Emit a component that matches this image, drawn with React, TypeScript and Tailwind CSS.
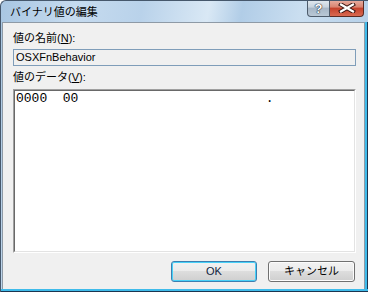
export default function App() {
  const jp = { fontFamily: '"Liberation Sans", "Noto Sans CJK JP", sans-serif' };

  return (
    <div
      className="w-[368px] h-[292px] flex flex-col overflow-hidden rounded-tl-[6px] border-l border-t border-[#46586c] bg-[linear-gradient(100deg,#a8c6e2_0%,#c6dbef_18%,#b9d2ea_34%,#d9e8f5_50%,#b1cde7_58%,#cadef0_72%,#a9c8e4_100%)]"
      style={jp}
    >
      {/* Title bar */}
      <div className="h-[21px] flex items-start">
        <span className="pl-[9px] pt-[5px] text-[11px] leading-[13px] text-black">バイナリ値の編集</span>
        <div className="ml-auto mr-[4px] -mt-px flex">
          <div className="w-[23px] h-[17px] flex items-center justify-center rounded-bl-[4px] border border-t-0 border-[#4d5b6b] bg-[linear-gradient(#e3eaf0_0%,#c7d3de_45%,#a6b6c6_50%,#b9c8d6_100%)]">
            <span className="text-[13px] leading-[13px] font-bold text-white [text-shadow:0_0_1px_#1d2a38,0_0_1px_#1d2a38,0_0_1px_#1d2a38]">?</span>
          </div>
          <div className="w-[34px] h-[17px] flex items-center justify-center rounded-br-[4px] border border-t-0 border-l-0 border-[#5b2a22] bg-[linear-gradient(#e8b0a4_0%,#d9826f_45%,#c5402a_50%,#d86a52_100%)]">
            <svg width="18" height="10" viewBox="0 0 18 10">
              <path d="M3 1.5 L15 8.5 M15 1.5 L3 8.5" stroke="#3a1410" strokeWidth="4.2" strokeLinecap="square" />
              <path d="M3 1.5 L15 8.5 M15 1.5 L3 8.5" stroke="#ffffff" strokeWidth="2.2" strokeLinecap="square" />
            </svg>
          </div>
        </div>
      </div>

      {/* Body with frame edges */}
      <div className="flex-1 flex pl-px">
        <div className="flex-1 flex flex-col bg-[#f0f0f0] border-l border-t border-r border-[#8e9aa6] pl-[10px] pr-[8px] pt-[8px]">
          <div className="text-[11px] leading-[14px] text-black">
            値の名前(<span className="underline">N</span>):
          </div>
          <div className="mt-[4px] h-[17px] border border-[#7f9db9] bg-[#f0f0f0] flex items-center pl-[2px] text-[11px] text-black">
            OSXFnBehavior
          </div>
          <div className="mt-[4px] text-[11px] leading-[14px] text-black">
            値のデータ(<span className="underline">V</span>):
          </div>
          <div className="mt-[5px] h-[164px] border-t border-l border-[#a0a0a0] border-r-white border-b-white border-r border-b flex">
            <div className="flex-1 bg-white border-t border-l border-[#696969] border-r border-b border-r-[#e3e3e3] border-b-[#e3e3e3] pl-[1px] pt-[1px]">
              <div
                className="whitespace-pre text-[13px] leading-[13px] text-black"
                style={{ fontFamily: '"Liberation Mono", monospace' }}
              >
                {'0000  00                        .'}
              </div>
            </div>
          </div>
          <div className="mt-[8px] flex justify-end gap-[11px] pr-[1px]">
            <button className="w-[86px] h-[21px] rounded-[3px] border border-[#3c7fb1] bg-[linear-gradient(#f2f2f2_0%,#ebebeb_50%,#dddddd_50%,#cfcfcf_100%)] shadow-[inset_0_0_0_1px_#48d1f8] text-[11px] text-[#10233d]">
              OK
            </button>
            <button className="w-[87px] h-[21px] rounded-[3px] border border-[#707070] bg-[linear-gradient(#f2f2f2_0%,#ebebeb_50%,#dddddd_50%,#cfcfcf_100%)] shadow-[inset_0_0_0_1px_#fcfcfc] text-[11px] text-black">
              キャンセル
            </button>
          </div>
        </div>
        <div className="w-[3px] bg-[#3fbbea] border-r border-[#1c3550]" />
      </div>
      <div className="h-[3px] bg-[#3fbbea] border-b border-[#1c3550]" />
    </div>
  );
}
